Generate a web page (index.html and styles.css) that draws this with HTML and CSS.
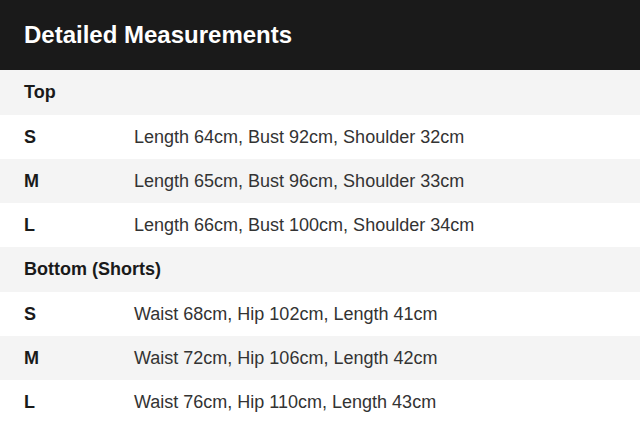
FILE: index.html
```html
<!DOCTYPE html>
<html>
<head>
<meta charset="utf-8">
<link rel="stylesheet" href="styles.css">
</head>
<body>
<div class="panel">
  <div class="header">Detailed Measurements</div>
  <div class="row section">Top</div>
  <div class="row"><span class="size">S</span><span class="val">Length 64cm, Bust 92cm, Shoulder 32cm</span></div>
  <div class="row alt"><span class="size">M</span><span class="val">Length 65cm, Bust 96cm, Shoulder 33cm</span></div>
  <div class="row"><span class="size">L</span><span class="val">Length 66cm, Bust 100cm, Shoulder 34cm</span></div>
  <div class="row section">Bottom (Shorts)</div>
  <div class="row"><span class="size">S</span><span class="val">Waist 68cm, Hip 102cm, Length 41cm</span></div>
  <div class="row alt"><span class="size">M</span><span class="val">Waist 72cm, Hip 106cm, Length 42cm</span></div>
  <div class="row"><span class="size">L</span><span class="val">Waist 76cm, Hip 110cm, Length 43cm</span></div>
</div>
</body>
</html>
```
FILE: styles.css
```css
html, body {
  margin: 0;
  padding: 0;
  background: #ffffff;
  font-family: "Liberation Sans", Arial, sans-serif;
}
.panel {
  width: 640px;
}
.header {
  background: #1a1a1a;
  color: #ffffff;
  font-weight: bold;
  font-size: 24px;
  height: 70px;
  padding: 0 24px;
  display: flex;
  align-items: center;
}
.row {
  display: grid;
  grid-template-columns: 110px 1fr;
  align-items: center;
  height: 44px;
  padding: 0 24px;
  font-size: 18px;
  color: #333333;
  background: #ffffff;
}
.row.alt, .row.section {
  background: #f4f4f4;
}
.row.section {
  display: flex;
  font-weight: bold;
  color: #1a1a1a;
  height: 45px;
}
.size {
  font-weight: bold;
  color: #1a1a1a;
}
.val {
  color: #333333;
}
```
